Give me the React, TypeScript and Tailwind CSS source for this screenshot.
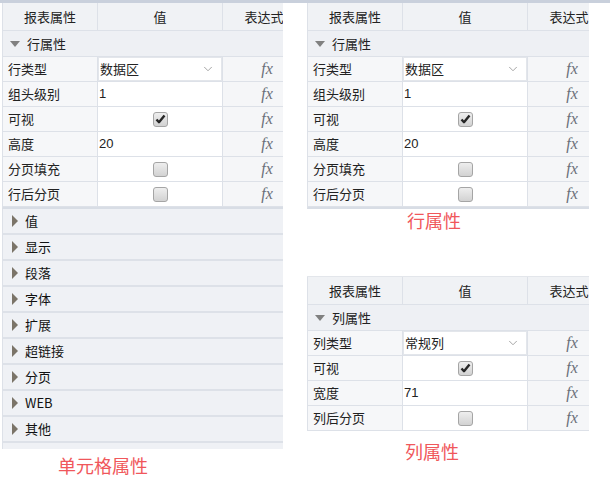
import { ChevronDown } from "lucide-react";

type Row = {
  label: string;
  kind: "select" | "text" | "check";
  value?: string;
  checked?: boolean;
};

const rowProps: Row[] = [
  { label: "行类型", kind: "select", value: "数据区" },
  { label: "组头级别", kind: "text", value: "1" },
  { label: "可视", kind: "check", checked: true },
  { label: "高度", kind: "text", value: "20" },
  { label: "分页填充", kind: "check", checked: false },
  { label: "行后分页", kind: "check", checked: false },
];

const colProps: Row[] = [
  { label: "列类型", kind: "select", value: "常规列" },
  { label: "可视", kind: "check", checked: true },
  { label: "宽度", kind: "text", value: "71" },
  { label: "列后分页", kind: "check", checked: false },
];

const groups = ["值", "显示", "段落", "字体", "扩展", "超链接", "分页", "WEB", "其他"];

const font = "font-['Noto_Sans_CJK_SC','Noto_Sans',sans-serif]";

function Checkbox({ checked }: { checked?: boolean }) {
  return (
    <div className="flex h-[15px] w-[15px] items-center justify-center rounded-[3px] border border-[#a5a5a5] bg-gradient-to-b from-[#eeeeee] to-[#d2d2d2]">
      {checked && (
        <svg width="11" height="10" viewBox="0 0 11 10">
          <path d="M1.5 5.5 L4 8.2 L9.5 1.5" fill="none" stroke="#262626" strokeWidth="2.4" strokeLinejoin="round" />
        </svg>
      )}
    </div>
  );
}

function Fx() {
  return (
    <span className="pl-[6px] font-['Liberation_Serif',serif] text-[16px] italic text-[#6a6f78]">
      fx
    </span>
  );
}

function DownTri() {
  return <div className="h-0 w-0 border-x-[5px] border-t-[6px] border-x-transparent border-t-[#808080]" />;
}

function RightTri() {
  return <div className="h-0 w-0 border-y-[6px] border-l-[6px] border-y-transparent border-l-[#7b7468]" />;
}

function Header() {
  return (
    <div className="flex h-[28px] border-b border-[#dde1e8] bg-[#f0f2f5] text-[13px] text-[#222]">
      <div className="flex w-[95px] shrink-0 items-center justify-center border-r border-[#dde1e8]">报表属性</div>
      <div className="flex w-[125px] shrink-0 items-center justify-center border-r border-[#dde1e8]">值</div>
      <div className="flex w-[82px] shrink-0 items-center justify-center">表达式</div>
    </div>
  );
}

function PropRow({ row }: { row: Row }) {
  return (
    <div className="flex h-[25px] border-b border-[#dde1e8] text-[13px] text-[#222]">
      <div className="flex w-[95px] shrink-0 items-center border-r border-[#dde1e8] bg-[#f6f7f9] pl-[5px]">
        {row.label}
      </div>
      <div className="flex w-[125px] shrink-0 items-center border-r border-[#dde1e8] bg-white">
        {row.kind === "select" && (
          <div className="flex h-full w-full items-center justify-between border border-[#e3e6eb] pl-[1px] pr-[6px]">
            <span>{row.value}</span>
            <ChevronDown size={14} strokeWidth={1.3} color="#8a8a8a" />
          </div>
        )}
        {row.kind === "text" && <span className="pl-[1px] font-['Liberation_Sans',sans-serif]">{row.value}</span>}
        {row.kind === "check" && (
          <div className="flex w-full justify-center">
            <Checkbox checked={row.checked} />
          </div>
        )}
      </div>
      <div className="flex w-[82px] shrink-0 items-center justify-center bg-[#f5f6f8]">
        <Fx />
      </div>
    </div>
  );
}

function PropPanel({ title, rows, bottomBorder }: { title: string; rows: Row[]; bottomBorder?: boolean }) {
  return (
    <div className={`overflow-hidden border-l border-[#dde1e8] ${bottomBorder ? "border-b-2 border-b-[#d8dde5]" : ""}`}>
      <Header />
      <div className="flex h-[26px] items-center gap-[7px] border-b border-[#dde1e8] bg-[#eef0f4] pl-[7px] text-[13px] text-[#222]">
        <DownTri />
        <span>{title}</span>
      </div>
      {rows.map((r) => (
        <PropRow key={r.label} row={r} />
      ))}
    </div>
  );
}

export default function App() {
  return (
    <div className={`h-[486px] w-[610px] overflow-hidden bg-white ${font}`}>
      <div className="h-[3px] w-full bg-[#c9d0dc]" />
      <div className="flex">
        <div className="w-[283px] shrink-0 pl-[2px]">
          <PropPanel title="行属性" rows={rowProps} bottomBorder />
          <div className="border-l border-[#dde1e8] bg-[#eff1f5] pb-[6px]">
            {groups.map((g) => (
              <div
                key={g}
                className="flex h-[26px] items-center gap-[7px] border-b-2 border-[#dde1e8] pl-[9px] text-[13px] text-[#111]"
              >
                <RightTri />
                <span>{g}</span>
              </div>
            ))}
          </div>
          <div className="pl-[56px] pt-[3px] text-[18px] text-[#f0575b]">单元格属性</div>
        </div>
        <div className="ml-[24px] w-[282px] shrink-0">
          <PropPanel title="行属性" rows={rowProps} bottomBorder />
          <div className="-mt-[2px] pl-[100px] text-[18px] text-[#f0575b]">行属性</div>
          <div className="h-[42px]" />
          <div className="border-t border-[#e3e6eb]">
            <PropPanel title="列属性" rows={colProps} />
          </div>
          <div className="pl-[98px] pt-[7px] text-[18px] text-[#f0575b]">列属性</div>
        </div>
      </div>
    </div>
  );
}
